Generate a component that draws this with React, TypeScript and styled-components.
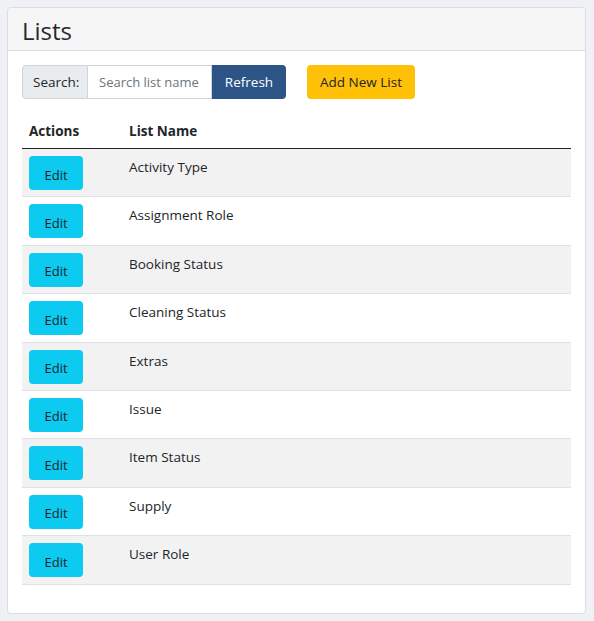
import styled, { createGlobalStyle } from "styled-components"

const GlobalStyle = createGlobalStyle`
  html, body {
    margin: 0;
    background: #f0f1f4;
    font-family: "Open Sans", "Noto Sans", "Liberation Sans", sans-serif;
    color: #212529;
  }
`;

const lists = [
  "Activity Type",
  "Assignment Role",
  "Booking Status",
  "Cleaning Status",
  "Extras",
  "Issue",
  "Item Status",
  "Supply",
  "User Role",
];

//#region CSS
const Page = styled.div`
  padding: 7px 8px 7px 7px;
`;

const Card = styled.div`
  background: #fff;
  border: 1px solid #dcdde0;
  border-radius: 4px;
  overflow: hidden;
`;

const CardHeader = styled.div`
  background: #f6f6f7;
  border-bottom: 1px solid #dcdde0;
  height: 43px;
  padding: 2px 14px 0;
  box-sizing: border-box;
  display: flex;
  align-items: center;
`;

const Title = styled.h2`
  margin: 0;
  font-size: 24px;
  font-weight: 400;
  color: #26292c;
`;

const CardBody = styled.div`
  padding: 14px 14px 28px 14px;
`;

const Toolbar = styled.div`
  display: flex;
  align-items: center;
  gap: 21px;
  margin-bottom: 14px;
`;

const InputGroup = styled.div`
  display: flex;
  height: 34px;
`;

const Addon = styled.span`
  display: flex;
  align-items: center;
  padding: 0 9px 0 10px;
  background: #e9ecef;
  border: 1px solid #ced4da;
  border-radius: 4px 0 0 4px;
  font-size: 13.5px;
  color: #212529;
  width: 66px;
  box-sizing: border-box;
`;

const SearchInput = styled.input`
  width: 124px;
  box-sizing: border-box;
  border: 1px solid #ced4da;
  border-left: none;
  padding: 0 6px 0 11px;
  font-family: inherit;
  font-size: 13px;
  outline: none;
  &::placeholder {
    color: #6c757d;
  }
`;

const Button = styled.button<{ variant: "primary" | "warning" | "info" }>`
  font-family: inherit;
  font-size: 13.5px;
  border: none;
  border-radius: 4px;
  cursor: pointer;
  ${({ variant }) => variant === "primary" && `
    background: #2d5486;
    color: #fff;
    width: 74px;
    padding: 0;
    border-radius: 0 4px 4px 0;
  `}
  ${({ variant }) => variant === "warning" && `
    background: #ffc107;
    color: #212529;
    width: 108px;
    padding: 0;
    height: 34px;
  `}
  ${({ variant }) => variant === "info" && `
    background: #0dcaf0;
    color: #212529;
    width: 54px;
    height: 34px;
    font-size: 13px;
    padding: 3px 0 0;
  `}
`;

const Table = styled.table`
  width: 100%;
  border-collapse: collapse;
  font-size: 13.5px;
`;

const Th = styled.th<{ w?: number }>`
  text-align: left;
  font-weight: 700;
  padding: 9px 7px 8px;
  border-bottom: 1px solid #212529;
  ${({ w }) => w && `width: ${w}px;`}
`;

const Row = styled.tr<{ striped: boolean }>`
  background: ${({ striped }) => (striped ? "#f2f2f2" : "#fff")};
  border-bottom: 1px solid #dee2e6;
`;

const Td = styled.td<{ text?: boolean }>`
  padding: ${({ text }) => (text ? "8px" : "7px")} 7px 6.4px;
  vertical-align: top;
  line-height: 21px;
`;
//#endregion

export default function App() {
  return (
    <Page>
      <GlobalStyle />
      <Card>
        <CardHeader>
          <Title>Lists</Title>
        </CardHeader>
        <CardBody>
          <Toolbar>
            <InputGroup>
              <Addon>Search:</Addon>
              <SearchInput placeholder="Search list name" />
              <Button variant="primary">Refresh</Button>
            </InputGroup>
            <Button variant="warning">Add New List</Button>
          </Toolbar>
          <Table>
            <thead>
              <tr>
                <Th w={86}>Actions</Th>
                <Th>List Name</Th>
              </tr>
            </thead>
            <tbody>
              {lists.map((name, i) => (
                <Row key={name} striped={i % 2 === 0}>
                  <Td>
                    <Button variant="info">Edit</Button>
                  </Td>
                  <Td text>{name}</Td>
                </Row>
              ))}
            </tbody>
          </Table>
        </CardBody>
      </Card>
    </Page>
  );
}
